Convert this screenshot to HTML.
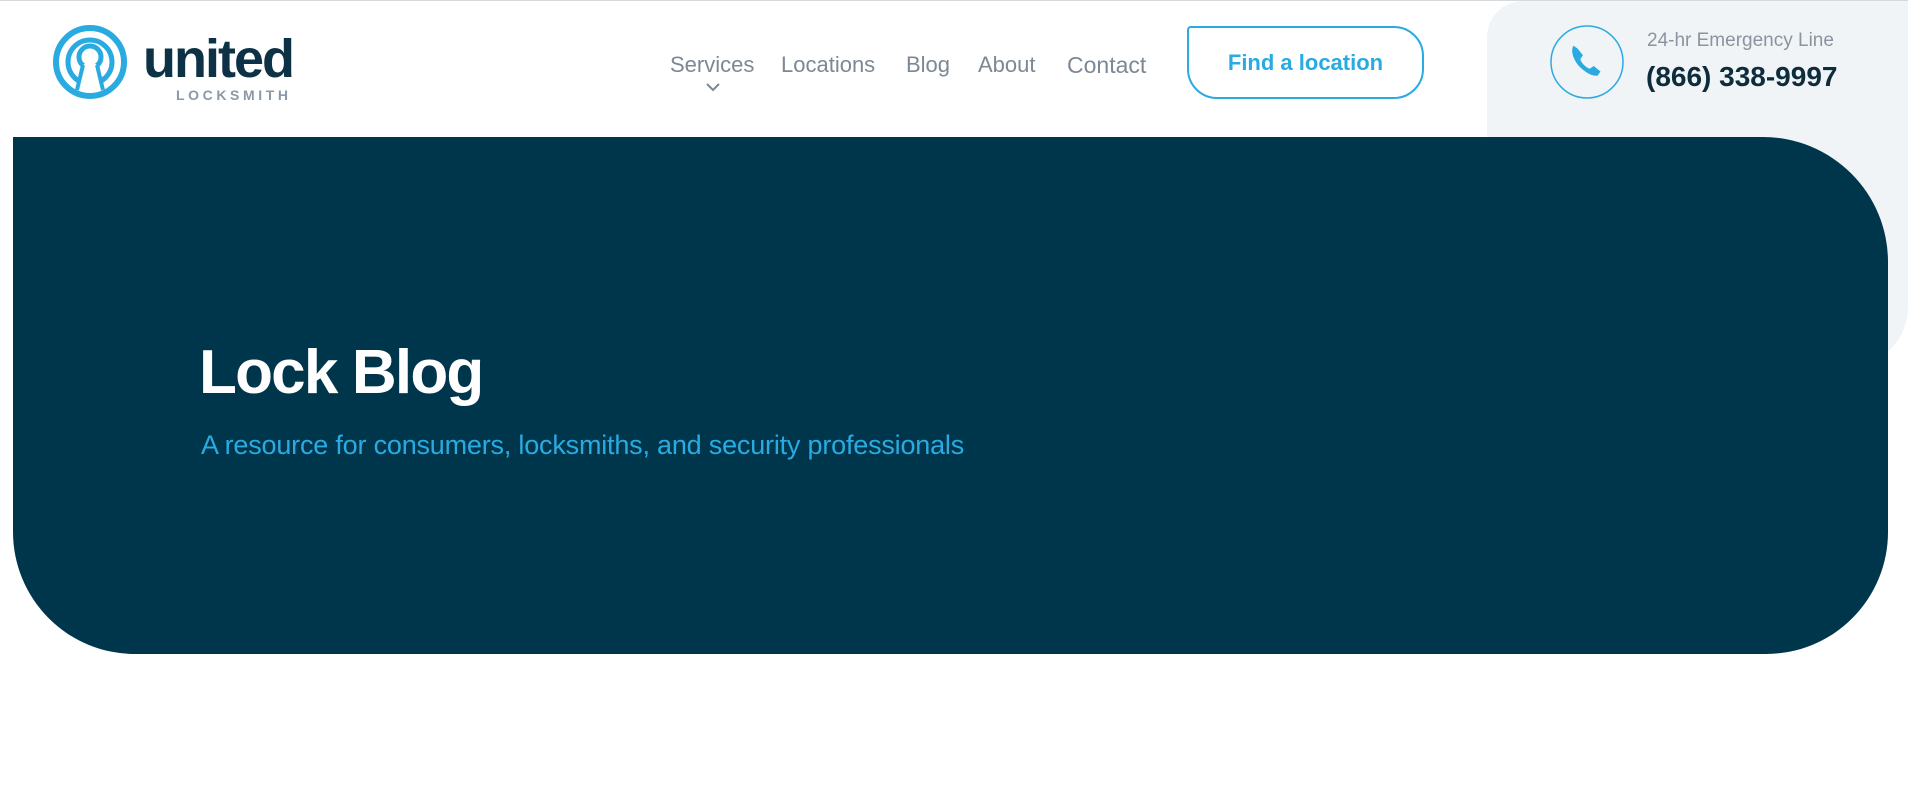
<!DOCTYPE html>
<html><head><meta charset="utf-8"><style>
*{margin:0;padding:0;box-sizing:border-box}
body{width:1908px;height:791px;overflow:hidden;background:#fff;font-family:"Liberation Sans",sans-serif;position:relative}
.topline{position:absolute;left:0;top:0;width:1908px;height:1px;background:#d6d9dc}
.grey{position:absolute;left:1487px;top:1px;width:421px;height:366px;background:#f1f4f6;border-radius:36px 0 60px 0}
.hero{position:absolute;left:13px;top:137px;width:1875px;height:517px;background:#00364c;border-radius:0 125px 122px 122px}
.abs{position:absolute;white-space:nowrap}
.nav{top:52px;font-size:22px;color:#7c8894}
.btn{position:absolute;left:1187px;top:26px;width:237px;height:73px;border:2px solid #29abe2;border-radius:4px 30px 30px 30px;color:#29abe2;font-size:22px;font-weight:bold;text-align:center;line-height:69px}
</style></head><body>
<div class="topline"></div>
<div class="grey"></div>
<div class="hero"></div>
<svg class="abs" style="left:52px;top:24px" width="76" height="76" viewBox="0 0 76 76">
<circle cx="38" cy="38" r="34" fill="none" stroke="#29abe2" stroke-width="6"/>
<circle cx="38" cy="38" r="22" fill="none" stroke="#29abe2" stroke-width="5"/>
<circle cx="38" cy="33" r="11" fill="none" stroke="#29abe2" stroke-width="5"/>
<path d="M32 40 L24 64 L52 64 L44 40 Z" fill="#fff"/>
<path d="M31 41 L25 66 M45 41 L51 66" stroke="#29abe2" stroke-width="4"/>
</svg>
<div class="abs" style="left:143px;top:28px;font-size:54px;font-weight:bold;color:#0d3246;letter-spacing:-2px">united</div>
<div class="abs" style="left:176px;top:87px;font-size:14px;font-weight:bold;color:#8a98a8;letter-spacing:3.6px">LOCKSMITH</div>
<div class="abs nav" style="left:670px">Services</div>
<svg class="abs" style="left:706px;top:83px" width="14" height="9"><path d="M1 1 L7 7 L13 1" fill="none" stroke="#7c8894" stroke-width="2"/></svg>
<div class="abs nav" style="left:781px">Locations</div>
<div class="abs nav" style="left:906px">Blog</div>
<div class="abs nav" style="left:978px">About</div>
<div class="abs nav" style="left:1067px;font-size:23px">Contact</div>
<div class="btn">Find a location</div>
<svg class="abs" style="left:1550px;top:25px" width="74" height="74" viewBox="0 0 74 74">
<circle cx="37" cy="37" r="36" fill="none" stroke="#29abe2" stroke-width="1.5"/>
<g transform="translate(37 37) scale(1.35) translate(-37 -37)">
<path d="M27 25 C25 28 26 34 31 40 C36 45 41 48 45 47 L47 44 L42 40 L39 42 C36 41 33 38 32 35 L34 32 L30 27 Z" fill="#29abe2"/>
</g>
</svg>
<div class="abs" style="left:1647px;top:30px;font-size:19px;color:#8a94a0">24-hr Emergency Line</div>
<div class="abs" style="left:1646px;top:61px;font-size:28px;font-weight:bold;color:#0d2c3c">(866) 338-9997</div>
<div class="abs" style="left:199px;top:337px;font-size:62px;font-weight:bold;color:#fff;letter-spacing:-1.8px">Lock Blog</div>
<div class="abs" style="left:201px;top:430px;font-size:27px;color:#29abe2;letter-spacing:-0.2px">A resource for consumers, locksmiths, and security professionals</div>
</body></html>
